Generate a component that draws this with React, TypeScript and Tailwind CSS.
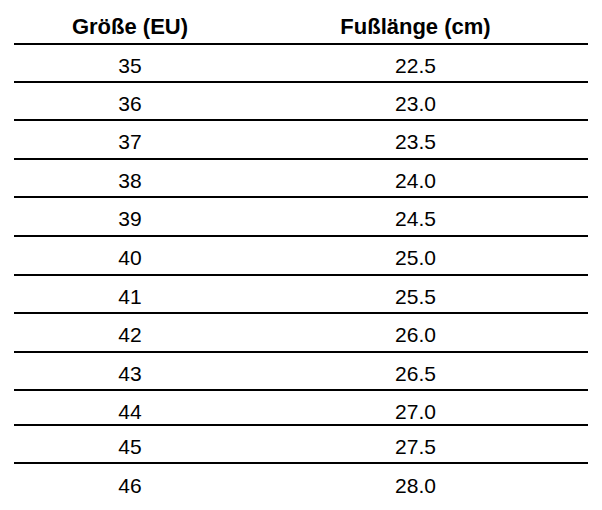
const rows = [
  { eu: "35", cm: "22.5", h: "h-[38px]" },
  { eu: "36", cm: "23.0", h: "h-[38px]" },
  { eu: "37", cm: "23.5", h: "h-[39px]" },
  { eu: "38", cm: "24.0", h: "h-[38px]" },
  { eu: "39", cm: "24.5", h: "h-[39px]" },
  { eu: "40", cm: "25.0", h: "h-[39px]" },
  { eu: "41", cm: "25.5", h: "h-[38px]" },
  { eu: "42", cm: "26.0", h: "h-[39px]" },
  { eu: "43", cm: "26.5", h: "h-[38px]" },
  { eu: "44", cm: "27.0", h: "h-[35px]" },
  { eu: "45", cm: "27.5", h: "h-[38px]" },
  { eu: "46", cm: "28.0", h: "h-[38px]" },
];

export default function App() {
  return (
    <div className="h-[510px] w-[602px] bg-white px-[14px] font-['Liberation_Sans',Arial,sans-serif] text-[21px] text-black">
      {/* header */}
      <div className="grid h-[45px] grid-cols-[232px_339px] items-center border-b-2 border-black pt-[10px] text-[22px] font-bold">
        <div className="text-center">Größe (EU)</div>
        <div className="text-center">Fußlänge (cm)</div>
      </div>
      {rows.map((r, i) => (
        <div
          key={r.eu}
          className={`grid grid-cols-[232px_339px] items-center pt-[5px] ${r.h} ${
            i < rows.length - 1 ? "border-b-2 border-black" : ""
          }`}
        >
          <div className="text-center">{r.eu}</div>
          <div className="text-center">{r.cm}</div>
        </div>
      ))}
    </div>
  );
}
